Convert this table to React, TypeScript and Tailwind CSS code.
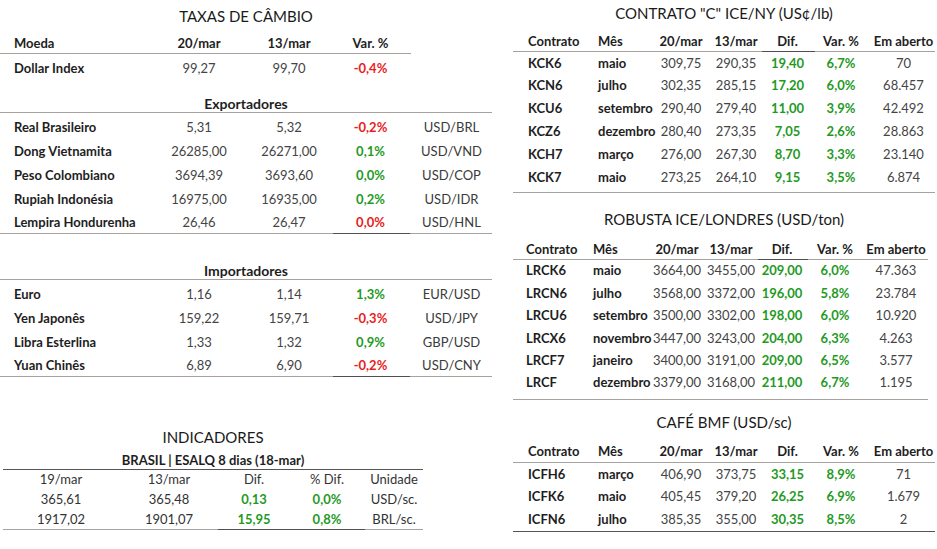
import React from "react";

const GREEN = "text-[#1f9a1f] font-bold";
const RED = "text-[#e81c1c] font-bold";

function C({ children, cls = "" }: { children?: React.ReactNode; cls?: string }) {
  return <div className={`flex justify-center whitespace-nowrap ${cls}`}>{children}</div>;
}
function Lft({ children, cls = "" }: { children?: React.ReactNode; cls?: string }) {
  return <div className={`flex justify-start whitespace-nowrap ${cls}`}>{children}</div>;
}

type FxRow = { n: string; a: string; b: string; v: string; up: boolean; cur?: string; last?: boolean };

function FxLine({ r }: { r: FxRow }) {
  return (
    <div className={`grid grid-cols-[150px_98px_82px_81px_81px] items-center ${r.last ? "h-[21px]" : "h-[24px]"}`}>
      <Lft cls="pl-[14px] font-bold text-[#1e1e1e]">{r.n}</Lft>
      <C cls="text-[#444]">{r.a}</C>
      <C cls="text-[#444]">{r.b}</C>
      <C cls={r.up ? GREEN : RED}>{r.v}</C>
      <C cls="text-[#3a3a3a]">{r.cur}</C>
    </div>
  );
}

function SplitLine({ a, b, c, w }: { a: number; b: number; c: number; w?: string }) {
  return (
    <div className={`flex h-px ${w ?? ""}`}>
      <div className="bg-[#a8a29e]" style={{ width: a }} />
      <div className="bg-[#505050]" style={{ width: b }} />
      <div className="bg-[#a8a29e]" style={{ width: c }} />
    </div>
  );
}

const exp: FxRow[] = [
  { n: "Real Brasileiro", a: "5,31", b: "5,32", v: "-0,2%", up: false, cur: "USD/BRL" },
  { n: "Dong Vietnamita", a: "26285,00", b: "26271,00", v: "0,1%", up: true, cur: "USD/VND" },
  { n: "Peso Colombiano", a: "3694,39", b: "3693,60", v: "0,0%", up: true, cur: "USD/COP" },
  { n: "Rupiah Indonésia", a: "16975,00", b: "16935,00", v: "0,2%", up: true, cur: "USD/IDR" },
  { n: "Lempira Hondurenha", a: "26,46", b: "26,47", v: "0,0%", up: false, cur: "USD/HNL", last: true },
];
const imp: FxRow[] = [
  { n: "Euro", a: "1,16", b: "1,14", v: "1,3%", up: true, cur: "EUR/USD" },
  { n: "Yen Japonês", a: "159,22", b: "159,71", v: "-0,3%", up: false, cur: "USD/JPY" },
  { n: "Libra Esterlina", a: "1,33", b: "1,32", v: "0,9%", up: true, cur: "GBP/USD" },
  { n: "Yuan Chinês", a: "6,89", b: "6,90", v: "-0,2%", up: false, cur: "USD/CNY", last: true },
];

type Fut = [string, string, string, string, string, string, string];

const kc: Fut[] = [
  ["KCK6", "maio", "309,75", "290,35", "19,40", "6,7%", "70"],
  ["KCN6", "julho", "302,35", "285,15", "17,20", "6,0%", "68.457"],
  ["KCU6", "setembro", "290,40", "279,40", "11,00", "3,9%", "42.492"],
  ["KCZ6", "dezembro", "280,40", "273,35", "7,05", "2,6%", "28.863"],
  ["KCH7", "março", "276,00", "267,30", "8,70", "3,3%", "23.140"],
  ["KCK7", "maio", "273,25", "264,10", "9,15", "3,5%", "6.874"],
];
const lrc: Fut[] = [
  ["LRCK6", "maio", "3664,00", "3455,00", "209,00", "6,0%", "47.363"],
  ["LRCN6", "julho", "3568,00", "3372,00", "196,00", "5,8%", "23.784"],
  ["LRCU6", "setembro", "3500,00", "3302,00", "198,00", "6,0%", "10.920"],
  ["LRCX6", "novembro", "3447,00", "3243,00", "204,00", "6,3%", "4.263"],
  ["LRCF7", "janeiro", "3400,00", "3191,00", "209,00", "6,5%", "3.577"],
  ["LRCF", "dezembro", "3379,00", "3168,00", "211,00", "6,7%", "1.195"],
];
const icf: Fut[] = [
  ["ICFH6", "março", "406,90", "373,75", "33,15", "8,9%", "71"],
  ["ICFK6", "maio", "405,45", "379,20", "26,25", "6,9%", "1.679"],
  ["ICFN6", "julho", "385,35", "355,00", "30,35", "8,5%", "2"],
];

function FutRow({ r, robusta, h }: { r: Fut; robusta?: boolean; h: string }) {
  const grid = robusta
    ? "grid-cols-[72px_63px_58px_50px_52px_54px_68px]"
    : "grid-cols-[77px_65px_52px_58px_45px_62px_63px]";
  return (
    <div className={`grid ${grid} items-center ${h}`}>
      <Lft cls={`${robusta ? "pl-[13px]" : "pl-[15px]"} font-bold text-[#1e1e1e]`}>{r[0]}</Lft>
      <Lft cls="pl-[8px] font-bold text-[#1e1e1e]">{r[1]}</Lft>
      <C cls="text-[#444]">{r[2]}</C>
      <C cls="text-[#444]">{r[3]}</C>
      <C cls={GREEN}>{r[4]}</C>
      <C cls={GREEN}>{r[5]}</C>
      <C cls="text-[#444]">{r[6]}</C>
    </div>
  );
}

function FutHead({ robusta }: { robusta?: boolean }) {
  const grid = robusta
    ? "grid-cols-[72px_63px_58px_50px_52px_54px_68px]"
    : "grid-cols-[77px_65px_52px_58px_45px_62px_63px]";
  return (
    <div className={`grid ${grid} font-bold text-[#1e1e1e] leading-[18px]`}>
      <Lft cls={robusta ? "pl-[13px]" : "pl-[15px]"}>Contrato</Lft>
      <Lft cls="pl-[8px]">Mês</Lft>
      <C>20/mar</C>
      <C>13/mar</C>
      <C>Dif.</C>
      <C>Var. %</C>
      <C>Em aberto</C>
    </div>
  );
}

export default function App() {
  return (
    <div className="flex w-[937px] h-[549px] bg-white font-['Lato','Noto_Sans',sans-serif] text-[13px] text-[#222] overflow-hidden">
      {/* LEFT */}
      <div className="w-[513px] shrink-0 flex flex-col">
        <div className="w-[492px] flex flex-col">
          <div className="h-[32px] flex items-center justify-center text-[15px] text-[#1a1a1a]">TAXAS DE CÂMBIO</div>
          <div className="h-[22px] pt-[2px] w-[411px] border-b border-[#a8a29e] grid grid-cols-[150px_98px_82px_81px] items-center font-bold text-[#1e1e1e]">
            <Lft cls="pl-[14px]">Moeda</Lft>
            <C>20/mar</C>
            <C>13/mar</C>
            <C>Var. %</C>
          </div>
          <div className="h-[30px] grid grid-cols-[150px_98px_82px_81px] items-center">
            <Lft cls="pl-[14px] font-bold text-[#1e1e1e]">Dollar Index</Lft>
            <C cls="text-[#444]">99,27</C>
            <C cls="text-[#444]">99,70</C>
            <C cls={RED}>-0,4%</C>
          </div>
          <div className="h-[29px] pt-[10px] border-b border-[#a8a29e] flex items-center justify-center font-bold text-[14px] text-[#1e1e1e]">
            Exportadores
          </div>
          <div className="pt-[3px]">
            {exp.map((r) => (
              <FxLine key={r.n} r={r} />
            ))}
          </div>
          <SplitLine a={333} b={77} c={82} />
          <div className="h-[46px] border-b border-[#a8a29e] flex items-end justify-center font-bold text-[14px] text-[#1e1e1e] leading-[16px]">
            Importadores
          </div>
          <div className="pt-[3px]">
            {imp.map((r) => (
              <FxLine key={r.n} r={r} />
            ))}
          </div>
          <SplitLine a={333} b={77} c={82} />
        </div>

        <div className="h-[50px]" />
        <div className="ml-[3px] w-[420px] flex flex-col">
          <div className="h-[20px] flex items-center justify-center text-[15px] text-[#1a1a1a]">INDICADORES</div>
          <div className="h-[23px] pt-[6px] border-b border-[#555] flex items-center justify-center font-bold text-[#1e1e1e]">
            BRASIL | ESALQ 8 dias (18-mar)
          </div>
          <div className="h-[20px] grid grid-cols-[116px_100px_70px_76px_58px] items-center text-[#333]">
            <C>19/mar</C>
            <C>13/mar</C>
            <C>Dif.</C>
            <C>% Dif.</C>
            <C>Unidade</C>
          </div>
          <div className="h-[20px] grid grid-cols-[116px_100px_70px_76px_58px] items-center text-[#333]">
            <C>365,61</C>
            <C>365,48</C>
            <C cls={GREEN}>0,13</C>
            <C cls={GREEN}>0,0%</C>
            <C>USD/sc.</C>
          </div>
          <div className="h-[19px] grid grid-cols-[116px_100px_70px_76px_58px] items-center text-[#333]">
            <C>1917,02</C>
            <C>1901,07</C>
            <C cls={GREEN}>15,95</C>
            <C cls={GREEN}>0,8%</C>
            <C>BRL/sc.</C>
          </div>
          <SplitLine a={215} b={147} c={58} />
        </div>
      </div>

      {/* RIGHT */}
      <div className="w-[422px] shrink-0 flex flex-col">
        <div className="h-[26px] flex items-center justify-center text-[15px] text-[#1a1a1a]">CONTRATO "C" ICE/NY (US¢/lb)</div>
        <div className="h-[25px] flex flex-col justify-end pb-[1px]">
          <FutHead />
        </div>
        <SplitLine a={249} b={53} c={120} />
        <div className="h-[141px] border-b border-[#a8a29e] flex flex-col">
          {kc.map((r) => (
            <FutRow key={r[0]} r={r} h="h-[22.8px]" />
          ))}
        </div>

        <div className="h-[36px] pt-[16px] flex justify-center text-[15px] leading-[20px] text-[#1a1a1a]">ROBUSTA ICE/LONDRES (USD/ton)</div>
        <div className="w-[417px] h-[30px] flex flex-col justify-end pb-[1px]">
          <FutHead robusta />
        </div>
        <SplitLine a={245} b={50} c={120} w="w-[415px]" />
        <div className="w-[415px] h-[140px] border-b border-[#a8a29e] flex flex-col">
          {lrc.map((r) => (
            <FutRow key={r[0]} r={r} robusta h="h-[22.4px]" />
          ))}
        </div>

        <div className="h-[32px] pt-[12px] flex justify-center text-[15px] leading-[20px] text-[#1a1a1a]">CAFÉ BMF (USD/sc)</div>
        <div className="h-[31px] flex flex-col justify-end pb-[2px] border-b border-[#a8a29e]">
          <FutHead />
        </div>
        <div className="h-[69px] border-b border-[#555] flex flex-col">
          {icf.map((r) => (
            <FutRow key={r[0]} r={r} h="h-[22.5px]" />
          ))}
        </div>
      </div>
    </div>
  );
}
